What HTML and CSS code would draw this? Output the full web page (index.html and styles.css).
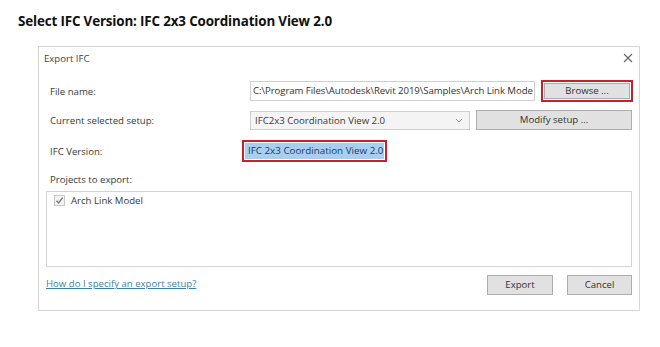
FILE: index.html
```html
<!DOCTYPE html>
<html>
<head>
<meta charset="utf-8">
<link rel="stylesheet" href="styles.css">
</head>
<body>
<h1 class="title">Select IFC Version: IFC 2x3 Coordination View 2.0</h1>
<div class="dialog">
  <div class="titlebar">
    <span class="caption">Export IFC</span>
    <svg class="close" width="10" height="10" viewBox="0 0 10 10"><path d="M1 1L9 9M9 1L1 9" stroke="#666" stroke-width="1.1" fill="none"/></svg>
  </div>
  <div class="row row-file">
    <span class="label">File name:</span>
    <div class="textbox"><span class="path">C:\Program Files\Autodesk\Revit 2019\Samples\Arch Link Mode</span></div>
    <div class="redbox redbox-browse"><div class="btn btn-browse">Browse ...</div></div>
  </div>
  <div class="row row-setup">
    <span class="label">Current selected setup:</span>
    <div class="combo"><span>IFC2x3 Coordination View 2.0</span>
      <svg class="chev" width="8" height="5" viewBox="0 0 8 5"><path d="M1 1L4 4L7 1" stroke="#888" stroke-width="1" fill="none"/></svg>
    </div>
    <div class="btn btn-modify">Modify setup ...</div>
  </div>
  <div class="row row-version">
    <span class="label label-version">IFC Version:</span>
    <div class="redbox redbox-version"><span class="highlight">IFC 2x3 Coordination View 2.0</span></div>
  </div>
  <div class="projects-label">Projects to export:</div>
  <div class="listbox">
    <div class="item">
      <span class="check"><svg width="9" height="9" viewBox="0 0 9 9"><path d="M1.5 4.8L3.6 7L7.6 1.6" stroke="#777" stroke-width="1.3" fill="none"/></svg></span>
      <span>Arch Link Model</span>
    </div>
  </div>
  <div class="footer">
    <a class="help" href="#">How do I specify an export setup?</a>
    <div class="actions">
      <div class="btn btn-export">Export</div>
      <div class="btn btn-cancel">Cancel</div>
    </div>
  </div>
</div>
</body>
</html>
```
FILE: styles.css
```css
html, body {
  margin: 0;
  padding: 0;
  background: #fff;
}
body {
  width: 660px;
  height: 347px;
  overflow: hidden;
  font-family: "Open Sans", "Noto Sans", sans-serif;
  color: #222;
}
.title {
  margin: 0;
  padding: 12px 0 0 18px;
  height: 34px;
  box-sizing: border-box;
  font-family: "Open Sans", sans-serif;
  font-weight: 700;
  font-size: 13.4px;
  letter-spacing: -0.15px;
  color: #111;
  line-height: 18px;
}
.dialog {
  margin: 12px 0 0 38px;
  width: 602px;
  height: 265px;
  box-sizing: border-box;
  border: 1px solid #d6d6d6;
  font-size: 9.6px;
  color: #3a3a3a;
  display: flex;
  flex-direction: column;
}
.titlebar {
  height: 20px;
  display: flex;
  align-items: center;
  justify-content: space-between;
  padding: 0 6px 0 5px;
  margin-top: 1px;
}
.caption {
  color: #444;
}
.row {
  display: flex;
  align-items: center;
  padding-left: 11px;
}
.label {
  width: 200px;
  flex: none;
}
.row-file {
  margin-top: 12px;
  height: 22px;
}
.textbox {
  width: 285px;
  height: 20px;
  box-sizing: border-box;
  border: 1px solid #d0d0d0;
  padding: 0 0 0 2px;
  line-height: 18px;
  white-space: nowrap;
  overflow: hidden;
  color: #333;
}
.path {
  letter-spacing: -0.05px;
}
.redbox {
  border: 2px solid #c8202c;
  box-sizing: border-box;
}
.redbox-browse {
  margin-left: 6px;
  width: 92px;
  height: 22px;
  padding: 1px;
}
.btn {
  background: #e1e1e1;
  border: 1px solid #adadad;
  box-sizing: border-box;
  text-align: center;
  color: #333;
}
.btn-browse {
  height: 16px;
  line-height: 14px;
}
.row-setup {
  margin-top: 8px;
  height: 20px;
}
.combo {
  width: 220px;
  height: 19px;
  box-sizing: border-box;
  border: 1px solid #d0d0d0;
  background: #f4f4f4;
  display: flex;
  align-items: center;
  justify-content: space-between;
  padding: 0 6px 0 4px;
}
.btn-modify {
  margin-left: 6px;
  width: 156px;
  height: 20px;
  line-height: 18px;
}
.row-version {
  margin-top: 10px;
  height: 22px;
}
.label-version {
  width: 192px;
}
.redbox-version {
  width: 145px;
  height: 22px;
  padding: 1px;
  display: flex;
  align-items: center;
}
.highlight {
  background: #a9cff0;
  color: #1a3b6a;
  height: 16px;
  line-height: 16px;
  flex: 1;
  padding-left: 3px;
  white-space: nowrap;
  font-size: 9.8px;
}
.projects-label {
  padding-left: 11px;
  margin-top: 10px;
  height: 16px;
  line-height: 16px;
}
.listbox {
  margin: 3px 7px 0 7px;
  height: 76px;
  box-sizing: border-box;
  border: 1px solid #d4d4d4;
  padding: 2px 7px;
}
.item {
  display: flex;
  align-items: center;
  gap: 6px;
}
.check {
  width: 9px;
  height: 9px;
  border: 1px solid #c8c8c8;
  background: #f2f2f2;
  display: flex;
}
.footer {
  display: flex;
  justify-content: space-between;
  align-items: flex-start;
  padding: 8px 7px 0 7px;
}
.help {
  color: #3d7fa8;
  text-decoration: underline;
  margin-top: 2px;
}
.actions {
  display: flex;
  gap: 14px;
}
.btn-export, .btn-cancel {
  width: 66px;
  height: 20px;
  line-height: 18px;
}
.btn-cancel {
  width: 65px;
}
```
